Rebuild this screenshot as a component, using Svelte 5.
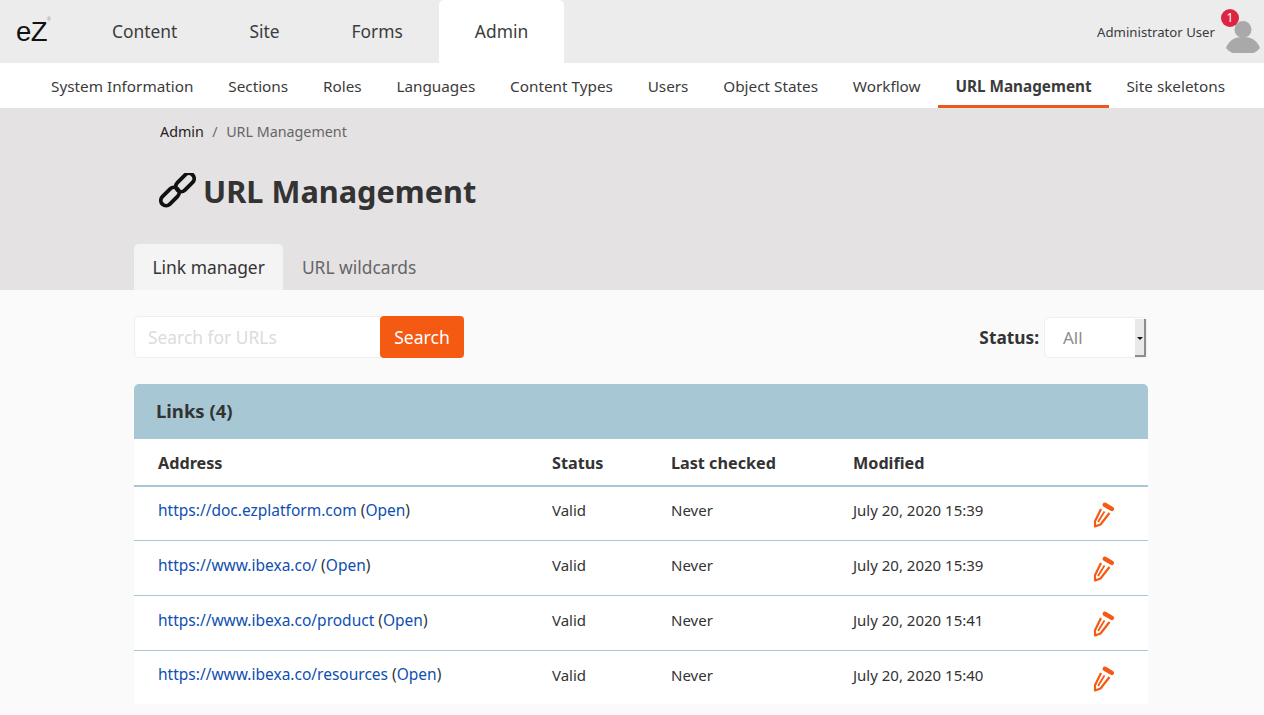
<script>
  const main = ['Content', 'Site', 'Forms', 'Admin'];
  const sub = ['System Information', 'Sections', 'Roles', 'Languages', 'Content Types', 'Users', 'Object States', 'Workflow', 'URL Management', 'Site skeletons'];
  const rows = [
    { url: 'https://doc.ezplatform.com', date: 'July 20, 2020 15:39' },
    { url: 'https://www.ibexa.co/', date: 'July 20, 2020 15:39' },
    { url: 'https://www.ibexa.co/product', date: 'July 20, 2020 15:41' },
    { url: 'https://www.ibexa.co/resources', date: 'July 20, 2020 15:40' }
  ];
</script>

<div class="page">
  <header class="top">
    <div class="logo">eZ<span class="tm">®</span></div>
    <nav class="main">
      {#each main as m}
        <a class="main-item" class:active={m === 'Admin'} href="#top">{m}</a>
      {/each}
    </nav>
    <div class="user">
      <span class="uname">Administrator User</span>
      <div class="avatar">
        <svg width="36" height="36" viewBox="0 0 36 36">
          <circle cx="19" cy="12.5" r="8.5" fill="#a9a9a9" />
          <path d="M2 31 C5 23 11 20 19 20 C27 20 33 23 36 31 C32 36 26 38 19 38 C12 38 6 36 2 31 Z" fill="#a9a9a9" />
        </svg>
        <span class="badge">1</span>
      </div>
    </div>
  </header>

  <nav class="sub">
    {#each sub as s}
      <a class="sub-item" class:active={s === 'URL Management'} href="#top">{s}</a>
    {/each}
  </nav>

  <section class="head">
    <div class="crumbs"><a href="#top">Admin</a><span class="sep">/</span><span class="cur">URL Management</span></div>
    <h1>
      <svg class="link-icon" width="37" height="37" viewBox="0 0 37 37" fill="none" stroke="#111" stroke-width="3.8">
        <rect x="15.25" y="4.25" width="21.5" height="10.5" rx="5.25" transform="rotate(-45 26 9.5)" />
        <rect x="0.25" y="18.25" width="21.5" height="10.5" rx="5.25" transform="rotate(-45 11 23.5)" />
      </svg>
      URL Management
    </h1>
    <div class="tabs">
      <a class="tab active" href="#top">Link manager</a>
      <a class="tab" href="#top">URL wildcards</a>
    </div>
  </section>

  <main class="content">
    <div class="filters">
      <div class="search">
        <input type="text" placeholder="Search for URLs" />
        <button>Search</button>
      </div>
      <div class="status">
        <span class="status-label">Status:</span>
        <div class="select">
          <span class="select-val">All</span>
          <span class="select-btn"></span>
        </div>
      </div>
    </div>

    <div class="panel">
      <h2>Links (4)</h2>
      <table>
        <thead>
          <tr>
            <th class="c1">Address</th>
            <th class="c2">Status</th>
            <th class="c3">Last checked</th>
            <th class="c4">Modified</th>
            <th class="c5"></th>
          </tr>
        </thead>
        <tbody>
          {#each rows as r}
            <tr>
              <td class="addr"><a href="#top">{r.url}</a> (<a href="#top">Open</a>)</td>
              <td>Valid</td>
              <td>Never</td>
              <td>{r.date}</td>
              <td class="edit">
                <svg width="22" height="27" viewBox="0 0 22 27" fill="none" stroke="#f55a13" stroke-width="2.2" stroke-linejoin="round">
                  <path d="M8 7 L2 19.3 L2 24.5 L7.5 22.5 L16.5 11" />
                  <path d="M11.5 9.5 L5 20" stroke-width="1.8" />
                  <path d="M11.8 2.8 L18.8 6.9" stroke-width="4.5" stroke-linecap="round" />
                </svg>
              </td>
            </tr>
          {/each}
        </tbody>
      </table>
    </div>
  </main>
</div>

<style>
  :global(body) {
    margin: 0;
    font-family: "Noto Sans", sans-serif;
    color: #333;
    background: #fafafa;
  }
  a { color: inherit; text-decoration: none; }
  .page { height: 715px; overflow: hidden; }

  .top {
    height: 63px;
    background: #ececec;
    display: flex;
    align-items: stretch;
  }
  .logo {
    position: relative;
    width: 76px;
    box-sizing: border-box;
    padding-left: 16px;
    font-family: "Liberation Sans", sans-serif;
    font-size: 27.5px;
    line-height: 63px;
    color: #111;
    letter-spacing: -0.5px;
  }
  .tm { position: absolute; left: 47px; top: 17px; font-size: 5px; line-height: 5px; color: #888; }
  .main { display: flex; }
  .main-item {
    padding: 0 36px;
    font-size: 17.4px;
    line-height: 63px;
    color: #3b3b3b;
  }
  .main-item.active { background: #fff; border-radius: 5px 5px 0 0; }
  .user { margin-left: auto; display: flex; align-items: center; }
  .uname { font-size: 13.2px; color: #3b3b3b; margin-right: 6px; position: relative; }
  .avatar { position: relative; width: 43px; height: 63px; }
  .avatar svg { position: absolute; left: 3px; top: 17px; }
  .badge {
    position: absolute; left: 0; top: 9px;
    width: 18px; height: 18px; border-radius: 50%;
    background: #dc2543; color: #fff;
    font-size: 12px; line-height: 18px; text-align: center;
  }

  .sub {
    height: 45px;
    background: #fff;
    display: flex;
    padding-left: 33.6px;
    box-sizing: border-box;
  }
  .sub-item {
    padding: 0 17.4px;
    font-size: 15.3px;
    line-height: 47px;
    color: #3b3b3b;
    white-space: nowrap;
  }
  .sub-item.active { font-weight: 700; border-bottom: 3px solid #e9591d; height: 42px; }

  .head {
    height: 182px;
    background: #e4e2e3;
    padding-left: 134px;
    box-sizing: border-box;
    display: flex;
    flex-direction: column;
  }
  .crumbs { padding: 14px 0 0 26px; font-size: 14.3px; line-height: 20px; color: #222; }
  .sep { margin: 0 8.5px; color: #6c6c6c; }
  .cur { color: #666; }
  h1 {
    margin: 28px 0 0 26px;
    display: flex;
    align-items: center;
    gap: 7px;
    font-size: 30.7px;
    font-weight: 700;
    line-height: 43px;
    color: #333;
  }
  .link-icon { flex: none; margin-left: -1px; }
  .tabs { display: flex; margin-top: auto; }
  .tab {
    padding: 0 18.5px;
    height: 46px;
    font-size: 17.4px;
    line-height: 46px;
    color: #666;
    border-radius: 5px 5px 0 0;
  }
  .tab.active { background: #f4f4f4; color: #333; }

  .content { padding: 26px 116px 0 134px; }
  .filters { display: flex; justify-content: space-between; align-items: center; height: 42px; }
  .search { display: flex; }
  input {
    width: 246px;
    height: 42px;
    box-sizing: border-box;
    border: 1px solid #eeeeee;
    border-right: 0;
    border-radius: 5px 0 0 5px;
    background: #fff;
    padding: 0 13px;
    font: 17.4px "Noto Sans", sans-serif;
    outline: none;
  }
  input::placeholder { color: #dcdcdc; opacity: 1; }
  button {
    width: 84px;
    height: 42px;
    border: 0;
    border-radius: 4px;
    background: #f55a13;
    color: #fff;
    font: 17.6px "Noto Sans", sans-serif;
    padding: 0;
  }
  .status { display: flex; align-items: center; gap: 5px; }
  .status-label { font-size: 17.3px; font-weight: 700; color: #333; }
  .select {
    position: relative;
    width: 103px;
    height: 41px;
    box-sizing: border-box;
    border: 1px solid #eee;
    border-radius: 5px;
    background: #fff;
    margin-right: 1px;
  }
  .select-val { position: absolute; left: 18px; top: 0; line-height: 40px; font-size: 17px; color: #8c8c8c; }
  .select-btn {
    position: absolute; right: 0; top: 1px; bottom: 0;
    width: 11px;
    background: #e9e9e9;
    border-right: 2px solid #8d8d8d;
    border-bottom: 2px solid #8d8d8d;
    box-sizing: border-box;
  }
  .select-btn::after {
    content: "";
    position: absolute; left: 2px; top: 18px;
    border-left: 3px solid transparent;
    border-right: 3px solid transparent;
    border-top: 3px solid #111;
  }

  .panel {
    margin-top: 26px;
    background: #fff;
    border-radius: 5px 5px 0 0;
    overflow: hidden;
  }
  h2 {
    margin: 0;
    height: 55px;
    background: #a7c7d4;
    padding-left: 22px;
    font-size: 18.5px;
    font-weight: 700;
    line-height: 53px;
    color: #333;
  }
  table { width: 100%; border-collapse: collapse; table-layout: fixed; font-size: 15px; }
  th, td { padding: 0 0 0 24px; text-align: left; }
  th { height: 47px; padding-top: 1px; box-sizing: border-box; font-size: 16.2px; font-weight: 700; color: #333; border-bottom: 2px solid #a7c7d4; }
  td { height: 55px; padding-bottom: 8px; box-sizing: border-box; border-bottom: 1px solid #a7c7d4; color: #333; }
  tbody tr:first-child td { height: 54px; padding-bottom: 7px; }
  tbody tr:not(:first-child) td { padding-top: 2px; }
  tbody tr:last-child td { height: 54px; padding-top: 1px; padding-bottom: 6px; border-bottom: 0; }
  td a { color: #0f4fb0; }
  td.addr { font-size: 15.5px; padding-bottom: 7px; }
  tbody tr:first-child td.addr { padding-bottom: 6px; }
  tbody tr:last-child td.addr { padding-bottom: 7px; }
  .c1 { width: 394px; }
  .c2 { width: 119px; }
  .c3 { width: 182px; }
  .c4 { width: 231px; }
  td.edit { padding-left: 33px; padding-right: 0; position: relative; }
  tbody tr td.edit { padding-bottom: 0; padding-top: 0; }
  tbody tr:first-child td.edit { padding-top: 2px; padding-bottom: 0; }
  tbody tr:last-child td.edit { padding-top: 2px; padding-bottom: 0; }
  .edit svg { display: block; margin-top: 3px; height: 27px; overflow: visible; }
</style>
